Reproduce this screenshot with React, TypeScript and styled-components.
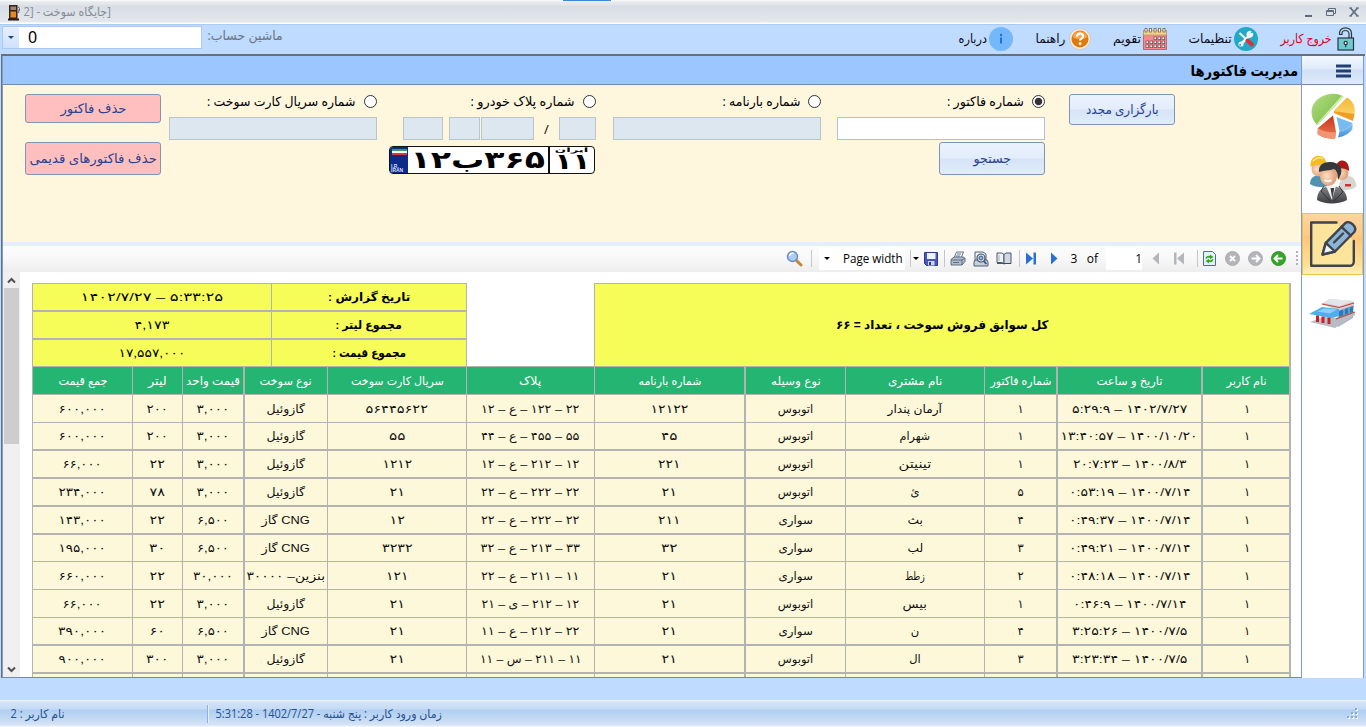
import React, { useLayoutEffect, useRef, useState } from "react";
import styled, { createGlobalStyle, css } from "styled-components";

const Global = createGlobalStyle`
  * { box-sizing: border-box; }
  body { margin: 0; background: #bfdbff; overflow: hidden; }
  svg { display: block; flex: none; }
`;

const uiFont = `"Open Sans", "Noto Sans", "DejaVu Sans", sans-serif`;
const reportFont = `"Liberation Sans", "DejaVu Sans", sans-serif`;

/* ---------- text that is condensed or stretched to a fixed measure ---------- */

const FitBox = styled.span<{ $w?: number }>`
  display: inline-flex;
  flex: none;
  justify-content: center;
  white-space: nowrap;
  ${(p) => p.$w && css`width: ${p.$w}px;`}
`;
const FitInner = styled.span<{ $ltr?: boolean; $space?: number }>`
  flex: none;
  white-space: pre;
  direction: rtl;
  ${(p) => p.$ltr && css`direction: ltr; unicode-bidi: bidi-override;`}
  ${(p) => p.$space && css`letter-spacing: ${p.$space}px;`}
`;

function Fit({ w, ltr, space, children }: { w?: number; ltr?: boolean; space?: number; children: React.ReactNode }) {
  const ref = useRef<HTMLSpanElement>(null);
  const [scale, setScale] = useState(1);
  useLayoutEffect(() => {
    if (w && ref.current && ref.current.offsetWidth) setScale(w / ref.current.offsetWidth);
  }, [w, children]);
  return (
    <FitBox $w={w}>
      <FitInner ref={ref} $ltr={ltr} $space={space} style={{ transform: `scaleX(${scale})` }}>{children}</FitInner>
    </FitBox>
  );
}

/* ---------- window ---------- */

const Window = styled.div`
  width: 1366px;
  height: 727px;
  display: flex;
  flex-direction: column;
  background: #bfdbff;
  font: 13px ${uiFont};
  color: #000;
  overflow: hidden;
`;
const TitleBar = styled.header`
  height: 24px;
  flex: none;
  display: flex;
  align-items: center;
  padding: 0 7px 0 8px;
  background: linear-gradient(#fff 0, #e6eaee 2px, #e1e5ea 5px, #d7dde5 6px, #e4e8ec 22px, #fff 23px);
  color: #848b95;
  font-size: 12px;
`;
const TitleText = styled.div`
  margin: 0 0 2px 3px;
`;
const Notch = styled.div`
  width: 48px;
  height: 1px;
  align-self: flex-start;
  margin-left: 452px;
  background: #3f87d9;
`;
const WindowButtons = styled.div`
  margin-left: auto;
  display: flex;
  gap: 13px;
`;
const MenuBar = styled.nav`
  height: 30px;
  flex: none;
  display: flex;
  align-items: flex-start;
  padding: 1px 11px 0 2px;
  background: #bfdbff;
  border-top: 1px solid #a9cbf5;
`;
const Combo = styled.div`
  width: 200px;
  height: 23px;
  display: flex;
  background: #fff;
  border: 1px solid #abc9f2;
  font-size: 16px;
  line-height: 21px;
`;
const ComboArrow = styled.div`
  width: 16px;
  height: 21px;
  display: flex;
  align-items: center;
  justify-content: center;
  background: linear-gradient(#e6f0fd, #cfe2fb);
`;
const ComboValue = styled.div`
  padding-left: 9px;
  font-family: "Noto Sans", sans-serif;
`;
const CalcLabel = styled.div`
  margin-left: 6px;
  line-height: 18px;
  color: #6b7480;
`;
const MenuItems = styled.div`
  margin-left: auto;
  display: flex;
  height: 25px;
  align-items: center;
`;
const MenuItem = styled.div<{ $gap: number; $red?: boolean; $icon: number }>`
  display: flex;
  align-items: center;
  margin-right: ${(p) => p.$gap}px;
  gap: ${(p) => p.$icon}px;
  font-size: 12.5px;
  color: ${(p) => (p.$red ? "#e3001b" : "#0b0b14")};
`;

const Body = styled.main`
  height: 624px;
  flex: none;
  display: flex;
  margin: 0 1px 0 1px;
  border: solid #6a7078;
  border-width: 2px 0 0 1px;
`;
const Left = styled.section`
  width: 1299px;
  flex: none;
  display: flex;
  flex-direction: column;
  border-left: 1px solid #7f9cc4;
`;
const PageTitle = styled.h1`
  height: 29px;
  flex: none;
  margin: 0;
  padding: 0 3px 0 0;
  display: flex;
  align-items: center;
  justify-content: flex-end;
  background: #9bc6ff;
  border-bottom: 1px solid #7089ad;
  font-size: 15px;
  font-weight: 700;
  line-height: 24px;
`;
const Side = styled.aside`
  width: 63px;
  flex: none;
  display: flex;
  flex-direction: column;
  background: #fff;
  border: solid #7f9cc4;
  border-width: 0 1px;
`;
const SideHead = styled.div`
  height: 29px;
  padding: 8px 0 0 34px;
  background: linear-gradient(#f3f8fe, #dfeafa 45%, #cfdff4 50%, #dfebfa);
  border-bottom: 1px solid #7089ad;
`;
const SideItem = styled.div<{ $active?: boolean; $h: number }>`
  height: ${(p) => p.$h}px;
  display: flex;
  justify-content: center;
  align-items: center;
  padding-bottom: ${(p) => (p.$active ? 0 : 2)}px;
  ${(p) => p.$active && css`
    background: linear-gradient(#fdd5a0 0, #ffca85 35%, #ffc579 38%, #ffe09a 85%, #fff0b8 100%);
    border: 1px solid #edc254;
  `}
`;

/* ---------- filter panel ---------- */

const Filters = styled.div`
  height: 157px;
  flex: none;
  display: flex;
  align-items: flex-start;
  padding: 9px 0 0 22px;
  background: #fff6de;
`;
const Strip = styled.div`
  height: 4px;
  flex: none;
  background: #e3efff;
`;
const Column = styled.div<{ $w: number; $ml?: number }>`
  width: ${(p) => p.$w}px;
  flex: none;
  margin-left: ${(p) => p.$ml ?? 0}px;
  display: flex;
  flex-direction: column;
  align-items: flex-end;
`;
const Button = styled.button<{ $w: number; $h: number; $danger?: boolean; $mt?: number }>`
  width: ${(p) => p.$w}px;
  height: ${(p) => p.$h}px;
  margin: ${(p) => p.$mt ?? 0}px 0 0;
  padding: 0 0 2px;
  display: flex;
  align-items: center;
  justify-content: center;
  border: 1px solid #7f95b8;
  border-radius: 3px;
  color: #29428c;
  font: 13px ${uiFont};
  background: ${(p) => (p.$danger ? "#ffbfbf" : "linear-gradient(#eaf2fc 0, #e3edfb 48%, #d5e4f7 52%, #e0ecfb 100%)")};
`;
const RadioRow = styled.div`
  height: 14px;
  display: flex;
  align-items: center;
  gap: 8px;
  margin-bottom: 9px;
`;
const Radio = styled.span<{ $on?: boolean }>`
  width: 13px;
  height: 13px;
  border: 1px solid #333;
  border-radius: 50%;
  background: ${(p) => (p.$on ? "radial-gradient(circle, #333 0 3.3px, #fff 4.2px)" : "#fff")};
`;
const Field = styled.div<{ $w: number; $on?: boolean }>`
  width: ${(p) => p.$w}px;
  height: 23px;
  flex: none;
  background: ${(p) => (p.$on ? "#fff" : "#dde7f0")};
  border: 1px solid ${(p) => (p.$on ? "#abc1de" : "#b9c5cc")};
`;
const PlateFields = styled.div`
  display: flex;
  align-items: center;
`;
const Slash = styled.span`
  width: 25px;
  text-align: center;
`;
const Spacer = styled.span<{ $w: number }>`
  width: ${(p) => p.$w}px;
  flex: none;
`;
const Plate = styled.div`
  width: 206px;
  height: 28px;
  margin: 6px 1px 0 0;
  display: flex;
  overflow: hidden;
  background: #fff;
  border: 1.5px solid #111;
  border-radius: 4px;
  font: 700 24px/25px "DejaVu Sans", sans-serif;
`;
const PlateFlag = styled.div`
  width: 18px;
  display: flex;
  flex-direction: column;
  justify-content: space-between;
  background: #0b2c8a;
  color: #cfdcf8;
  font: 700 5px/4px "Liberation Sans", sans-serif;
  padding: 2px 1px 1px;
`;
const Flag = styled.div`
  height: 6px;
  margin-left: 1px;
  background: linear-gradient(#3c9a5b 0 2px, #fff 2px 4px, #d43c3c 4px);
`;
const PlateMain = styled.div`
  flex: 1;
  display: flex;
  justify-content: center;
  align-items: center;
`;
const PlateCode = styled.div`
  width: 46px;
  display: flex;
  flex-direction: column;
  align-items: center;
  border-left: 2px solid #111;
  font-size: 22px;
  line-height: 18px;
`;
const PlateCountry = styled.div`
  height: 6px;
  font-size: 6px;
  line-height: 6px;
`;

/* ---------- report toolbar ---------- */

const ReportBar = styled.div`
  height: 25px;
  flex: none;
  display: flex;
  align-items: center;
  background: linear-gradient(#fcfcfd, #f8f8f8 50%, #eee 100%);
  font: 12px "Open Sans", sans-serif;
`;
const Slot = styled.div<{ $w: number; $white?: boolean; $right?: number }>`
  width: ${(p) => p.$w}px;
  height: 23px;
  flex: none;
  display: flex;
  align-items: center;
  justify-content: ${(p) => (p.$right !== undefined ? "flex-end" : "center")};
  padding-right: ${(p) => p.$right ?? 0}px;
  background: ${(p) => (p.$white ? "#fff" : "transparent")};
`;
const Sep = styled.div<{ $l: number; $r: number }>`
  width: 1px;
  height: 17px;
  flex: none;
  margin: 0 ${(p) => p.$r}px 0 ${(p) => p.$l}px;
  background: #c3c6cb;
`;
const Caret = styled.span<{ $c?: string }>`
  border: 3px solid transparent;
  border-top-color: ${(p) => p.$c ?? "#000"};
  border-bottom: 0;
`;
const Grip = styled.div`
  width: 2px;
  height: 15px;
  background: repeating-linear-gradient(#aeb3ba 0 2px, transparent 2px 4px);
`;

/* ---------- report ---------- */

const Viewer = styled.div`
  height: 407px;
  flex: none;
  display: flex;
  background: #fff;
  border-top: 1px solid #eee;
  border-bottom: 1px solid #7089ad;
  overflow: hidden;
`;
const Scroll = styled.div`
  width: 17px;
  flex: none;
  display: flex;
  flex-direction: column;
  align-items: center;
  background: #f0f0f0;
  padding: 5px 1px 4px 1px;
`;
const Thumb = styled.div`
  width: 15px;
  height: 156px;
  margin: 4px 0 auto;
  background: #cdcdcd;
`;
const Sheet = styled.div`
  margin: 11px 0 0 12px;
  width: 1259px;
  flex: none;
  font: 11.5px ${reportFont};
`;
const line = "#b3b3b3";
const Summary = styled.div`
  display: flex;
  height: 83px;
`;
const SummaryGrid = styled.div`
  width: 435px;
  display: grid;
  grid-template-columns: 239px 195px;
  grid-template-rows: 27px 28px 28px;
  border-right: 1px solid ${line};
`;
const SummaryCell = styled.div<{ $thick?: boolean; $bold?: boolean }>`
  display: flex;
  align-items: center;
  justify-content: center;
  background: #f7fd58;
  border-left: 1px solid ${line};
  border-top: ${(p) => (p.$thick ? 2 : 1)}px solid ${line};
  font-weight: ${(p) => (p.$bold ? 700 : 400)};
`;
const SummaryTitle = styled.div`
  margin-left: 127px;
  width: 697px;
  display: flex;
  align-items: center;
  justify-content: center;
  background: #f7fd58;
  border: solid ${line};
  border-width: 1px 2px 0 1px;
  font-weight: 700;
  font-size: 12px;
`;
const Row = styled.div<{ $h: number; $thick?: boolean; $head?: boolean }>`
  display: grid;
  grid-template-columns: 100px 50px 61px 84px 139px 128px 150px 101px 139px 72px 145px 90px;
  height: ${(p) => p.$h}px;
  overflow: hidden;
  border-top: ${(p) => (p.$thick ? 2 : 1)}px solid ${line};
  border-right: 2px solid ${line};
  background: ${(p) => (p.$head ? "#24b573" : "#fdf8da")};
  color: ${(p) => (p.$head ? "#fff" : "#101010")};
`;
const Cell = styled.div<{ $thick?: boolean }>`
  display: flex;
  align-items: center;
  justify-content: center;
  min-width: 0;
  border-left: ${(p) => (p.$thick ? 2 : 1)}px solid ${line};
`;

/* ---------- status bar ---------- */

const Band = styled.div`
  height: 22px;
  flex: none;
  margin-left: 2px;
`;
const Status = styled.footer`
  height: 27px;
  flex: none;
  display: flex;
  align-items: center;
  padding: 0 8px 0 10px;
  background: linear-gradient(#eaf3fe 0 1px, #d3e3f7 2px, #c5dbf5 9px, #afcef2 10px, #c4daf4 19px, #d6e4f5 25px, #edf4fc 26px);
  color: #25508f;
  font-size: 12px;
`;
const StatusSep = styled.div<{ $l: number }>`
  width: 2px;
  height: 18px;
  margin: 0 7px 0 ${(p) => p.$l}px;
  border-left: 1px solid #8fb0dc;
  border-right: 1px solid #e6f0fc;
`;

/* ---------- icons ---------- */

const PumpIcon = () => (
  <svg width="13" height="17" viewBox="0 0 13 17">
    <rect x="0" y="14.5" width="11" height="2" fill="#2b1a14" />
    <rect x="1" y="1" width="8.500" height="14" fill="#3a2119" />
    <rect x="2.500" y="2.500" width="5.500" height="3.500" fill="#9b8577" />
    <rect x="2.500" y="7.500" width="5.500" height="6" fill="#e28b25" />
    <path d="M9.500 8.500h1.300V5.500M10 2.500l1.500 2v2" fill="none" stroke="#6b5a55" />
  </svg>
);
const MinIcon = () => <svg width="9" height="12"><path d="M1 10h7" stroke="#5d6b7c" strokeWidth="2" /></svg>;
const RestoreIcon = () => (
  <svg width="10" height="12" viewBox="0 0 10 12" fill="none" stroke="#5d6b7c">
    <path d="M.5 4.500h7v5h-7zM2.500 4V2.500h7v5H8M1 5.500h6" />
  </svg>
);
const CloseIcon = () => (
  <svg width="10" height="12" viewBox="0 0 10 12"><path d="M1.500 2l7 8M8.500 2l-7 8" stroke="#5d6b7c" strokeWidth="1.700" /><path d="M0 2h3M7 2h3M0 10h3M7 10h3" stroke="#5d6b7c" /></svg>
);
const LockIcon = () => (
  <svg width="18" height="24" viewBox="0 0 18 24" stroke="#2b3440" strokeWidth="1.200">
    <path d="M2.500 7.500V6a6 5.200 0 0 1 12 0v6h-2.500V6.500a3.500 3 0 0 0-7 0v1z" fill="#bfe3ee" />
    <rect x="1" y="11" width="15.500" height="12" fill="#6fcad0" />
    <circle cx="8.700" cy="16" r="1.600" fill="#fff" />
    <path d="M8.700 17.600v2.600" />
  </svg>
);
const ToolsIcon = () => (
  <svg width="24" height="24" viewBox="0 0 24 24">
    <circle cx="12" cy="12" r="12" fill="#22a9c6" />
    <path d="M17 7L7.500 16.500" stroke="#f3f3f3" strokeWidth="2.500" strokeLinecap="round" />
    <path d="M18.800 5.500l-2.300 2.200-1-1 2.200-2.300a3.500 3.500 0 1 0 1.100 1.100z" fill="#f3f3f3" />
    <circle cx="7" cy="17" r="2.600" fill="#f3f3f3" /><circle cx="6.200" cy="17.800" r="1" fill="#22a9c6" />
    <path d="M5.500 6l7.500 7" stroke="#f3f3f3" strokeWidth="2" />
    <path d="M13.500 13.500l4.500 4" stroke="#d5333d" strokeWidth="4" strokeLinecap="round" />
  </svg>
);
const CalendarIcon = () => (
  <svg width="24" height="22" viewBox="0 0 24 22">
    <rect x=".5" y="3" width="23" height="18.500" fill="#f48a8d" stroke="#b96b6b" />
    <rect x=".5" y="2.500" width="23" height="4.500" fill="#f2d58b" stroke="#b39a6a" strokeWidth=".7" />
    {[3, 7.5, 12, 16.5, 21].map((x) => <rect key={x} x={x - 1} y=".5" width="2" height="3.500" fill="#fff" stroke="#75655b" strokeWidth=".8" />)}
    {[9, 13, 17].map((y) => [3, 7, 11, 15, 19].map((x) => (y === 9 && x < 10 ? null : (
      <rect key={`${x}-${y}`} x={x} y={y} width="2.600" height="2.600" fill="#fff" stroke="#815359" strokeWidth=".8" />
    ))))}
  </svg>
);
const HelpIcon = () => (
  <svg width="22" height="22" viewBox="0 0 22 22">
    <circle cx="11" cy="11" r="10.500" fill="#f4ece2" stroke="#c9b9a5" strokeWidth=".6" />
    <circle cx="11" cy="11" r="8.500" fill="#e2770a" /><path d="M3.500 9a7.800 7.800 0 0 1 15 0c-4 3-11 3-15 0z" fill="#f5a649" />
    <path d="M8 8.700c0-4 6-4 6-.5 0 2.300-2.900 2.300-2.900 4.300" fill="none" stroke="#fff" strokeWidth="2.200" />
    <circle cx="11.100" cy="15.700" r="1.400" fill="#fff" />
  </svg>
);
const InfoIcon = () => (
  <svg width="24" height="24" viewBox="0 0 24 24">
    <circle cx="12" cy="12" r="12" fill="#74b7fb" />
    <path d="M12 10.500v6" stroke="#1473e6" strokeWidth="2" /><circle cx="12" cy="8" r="1.200" fill="#1473e6" />
  </svg>
);
const BarsIcon = () => <svg width="15" height="14"><path d="M0 2h15M0 7h15M0 12h15" stroke="#1f3f77" strokeWidth="3" /></svg>;

const PieIcon = () => (
  <svg width="46" height="46" viewBox="0 0 46 46">
    <defs>
      <linearGradient id="pg" x1="0" y1="0" x2="1" y2="1"><stop offset="0" stopColor="#b4de84" /><stop offset="1" stopColor="#6eb63a" /></linearGradient>
      <linearGradient id="py" x1="0" y1="0" x2="0" y2="1"><stop offset="0" stopColor="#f5b735" /><stop offset="1" stopColor="#fbd66f" /></linearGradient>
      <linearGradient id="pr" x1="0" y1="0" x2="0" y2="1"><stop offset="0" stopColor="#c8321b" /><stop offset="1" stopColor="#ec7a55" /></linearGradient>
      <linearGradient id="pb" x1="0" y1="0" x2="0" y2="1"><stop offset="0" stopColor="#8fc8f2" /><stop offset="1" stopColor="#3f8fdc" /></linearGradient>
    </defs>
    <path d="M7 32C-3 22 0 3 22 .8c5-.4 8 .8 11.500 3L7.500 32z" fill="url(#pg)" />
    <path d="M33.500 3.800L7.500 32l-2-3L29 5z" fill="#8fcb5a" />
    <path d="M33.500 3.800L7.500 32l-.8-1L31.500 3z" fill="#d6edba" />
    <path d="M24 17.500L37 4.500c6.500 4 8.500 10 7.500 16.500l-1.500 3z" fill="url(#py)" />
    <path d="M24 18l20.500 3-1.500 7-19-8z" fill="#f09e22" />
    <path d="M23 22.500L26 39l-1 6.500c-7 .8-13-1-17.500-4.500L8 35z" fill="url(#pr)" />
    <path d="M7.700 35c5 3.500 11.500 4.800 18.300 4l-.7 6.500c-7 .8-13.300-1-17.600-4.500z" fill="#f09474" />
    <path d="M26.500 24l16 6c-2.500 4.500-7 7.500-13 8.500z" fill="#79baf0" />
    <path d="M42.500 30v5.500c-2.500 4.500-7.500 7.800-14.500 9l1.500-6c6-1 10.500-4 13-8.500z" fill="url(#pb)" />
  </svg>
);
const PeopleIcon = () => (
  <svg width="48" height="50" viewBox="0 0 48 50">
    <defs>
      <linearGradient id="suit" x1="0" y1="0" x2="0" y2="1"><stop offset="0" stopColor="#85878a" /><stop offset="1" stopColor="#3c3d40" /></linearGradient>
      <radialGradient id="face" cx=".4" cy=".5" r=".6"><stop offset="0" stopColor="#fde0c4" /><stop offset="1" stopColor="#dd9a70" /></radialGradient>
    </defs>
    <path d="M1 29c0-7 5-9 11-9s10 4 10 9c-5 4-16 4-21 0z" fill="#4d93b0" />
    <ellipse cx="9.500" cy="14" rx="7" ry="7.500" fill="url(#face)" />
    <path d="M1.500 12C1 4 5 .8 9.500 .8S17.500 4 17.500 10c-5-1.500-11-1-16 2z" fill="#f4bc1c" />
    <path d="M4 6c3-3 7-4 10-2" stroke="#fde88a" strokeWidth="1.500" fill="none" />
    <path d="M30 35c-1-8 3-14 9-14s8 6 8.500 10c-3 4-12 5-17.500 4z" fill="#d7d5cf" />
    <ellipse cx="33" cy="18" rx="6.500" ry="7" fill="url(#face)" />
    <path d="M27 13c0-5 3-7.500 6.500-7.500S40.500 9 40 16c-4-3-8-3-13-3z" fill="#a9191b" />
    <path d="M36 29h6v2.500h-6z" fill="#c33" />
    <path d="M8 45c0-9 6-14 14.500-14S38 36 38 45c-7 4-22 5-30 0z" fill="url(#suit)" />
    <path d="M17 31l6 14 4-14z" fill="#f4f4f4" /><path d="M21.500 33l1.800 11 2-11z" fill="#3d3d42" />
    <path d="M15 31l-3 5 9 10M30 31l4 6-9 9" stroke="#303236" fill="none" />
    <ellipse cx="19.500" cy="21" rx="8.500" ry="10" fill="url(#face)" />
    <path d="M10 17C9 9 16 6.500 22 7s12 4 10 12l-3 6c0-6-1-9-4-11-5 2-10 1-15 3z" fill="#37383c" />
    <path d="M15.500 25c2 1.500 5 1.500 7 0" stroke="#fff" strokeWidth="1.600" fill="none" />
  </svg>
);
const EditIcon = () => (
  <svg width="48" height="48" viewBox="0 0 48 48" fill="none" stroke="#3e444b" strokeWidth="2.400" strokeLinejoin="round" strokeLinecap="round">
    <path d="M27.500 2.500H2.200v43.300h42V21" stroke="none" fill="#fde49c" />
    <path d="M27.500 2.500H2.200v43.300h38.600a4 4 0 0 0 4-4V21" />
    <path d="M13.500 34.500l3.300-11.700L36 3.300c4-4 13 3.500 9.300 8.700L26 31.500z" fill="#8cb4d6" />
    <path d="M13.500 34.500l3.300-11.700 9.200 8.700z" fill="#eef3fa" />
    <path d="M32.500 6.800l9.300 8.800M25 22.500l9-9" />
  </svg>
);
const StationIcon = () => (
  <svg width="48" height="32" viewBox="0 0 48 32">
    <path d="M13 6l7-5 24 2 1 4-15 6z" fill="#cfd2d8" />
    <path d="M14 4.500L21 1l23 2-13 5z" fill="#e3e5e9" />
    <path d="M28 13l17-6-1 13-15 9z" fill="#a9b2c2" />
    <path d="M30 13l14-5v6l-14 5z" fill="#2f79b7" /><path d="M35 11v6M40 9.500v6" stroke="#8cc5ea" />
    <path d="M13 6l17 3.500L45 5" stroke="#c8402f" strokeWidth="1.200" fill="none" />
    <path d="M1 24l14-5 15 1 16-5v2L26 30z" fill="#b9bcc4" />
    <path d="M27 21l19-7" stroke="#bd4539" strokeWidth="1.200" />
    <path d="M0 16L13 9l17 2v7l-7 2z" fill="#4faeee" /><path d="M8 13.500l7-3 13 1-7 4z" fill="#8dd0fa" />
    <path d="M7 17.500h3v6.500H7zM12.500 18.500h3v6.500h-3zM18.500 19.500h3v6.500h-3z" fill="#c4232c" />
  </svg>
);

const SearchIcon = () => (
  <svg width="17" height="17" viewBox="0 0 17 17">
    <path d="M10 10l5 5" stroke="#c98438" strokeWidth="3" strokeLinecap="round" />
    <circle cx="6.500" cy="6.500" r="5" fill="#a9cdf5" stroke="#6c8cc5" strokeWidth="1.500" />
    <path d="M3.500 6c.5-2 2-3 4-2.500" stroke="#fff" strokeWidth="1.500" fill="none" />
  </svg>
);
const SaveIcon = () => (
  <svg width="14" height="14" viewBox="0 0 14 14">
    <path d="M.5 .5h13v13h-11l-2-2z" fill="#4b56bd" stroke="#2f3a93" />
    <rect x="3" y="1" width="8.500" height="6" fill="#eef2fb" /><rect x="4" y="9" width="6.500" height="4.500" fill="#cfd5ec" /><rect x="5" y="10" width="2" height="3" fill="#2f3a93" />
  </svg>
);
const PrintIcon = () => (
  <svg width="16" height="15" viewBox="0 0 16 15" stroke="#566479" strokeWidth=".9">
    <path d="M4 7L6.500 1h7L11 7z" fill="#fff" /><path d="M1 8.500L4 6h9.500l1.500 1.500v3L12 14H1z" fill="#aebccd" />
    <path d="M1 9h11l3-2M12 9v5M3 11.500h6M7 3h4M6 5h4" fill="none" />
  </svg>
);
const PreviewIcon = () => (
  <svg width="16" height="16" viewBox="0 0 16 16" stroke="#44506a" strokeWidth=".9">
    <path d="M2 1h8l3 2v7H2z" fill="#f1f4f7" /><path d="M1 11l1-2h12l1 2v4H1z" fill="#c6cfda" />
    <circle cx="8" cy="7" r="4" fill="#d6eafd" strokeWidth="1.200" /><circle cx="8" cy="7" r="2" fill="#8ab2dd" /><path d="M10.800 10l2.500 3" strokeWidth="1.800" />
  </svg>
);
const BookIcon = () => (
  <svg width="16" height="13" viewBox="0 0 16 13" stroke="#39485e" strokeWidth=".9">
    <path d="M1 1h5l2 1.500V12L6 10.500H1z" fill="#eef2f6" /><path d="M8 2.500L10 1h5v10.500H9.500L8 12z" fill="#cfd8e3" /><path d="M1 11.500h14" /><path d="M3 3v6" stroke="#9aa7b8" />
  </svg>
);
const Play = ({ dir, bar, c }: { dir: "l" | "r"; bar?: boolean; c: string }) => (
  <svg width="12" height="13" viewBox="0 0 12 13" fill={c}>
    {dir === "r" ? <path d={bar ? "M1 .5l7 6-7 6z" : "M3 .5l6.500 6-6.500 6z"} /> : <path d={bar ? "M11 .5l-7 6 7 6z" : "M9 .5l-6.500 6 6.500 6z"} />}
    {bar && <rect x={dir === "r" ? 8.5 : 1} y=".5" width="2.500" height="12" />}
  </svg>
);
const RefreshIcon = () => (
  <svg width="13" height="15" viewBox="0 0 13 15">
    <path d="M.5 .5h9l3 3v11H.5z" fill="#e6f1fb" stroke="#44709f" />
    <path d="M2.500 7.500C3 5.500 4.500 4.500 7 5V3.500L10.500 6 7 8.500V7C5 6.500 4 7 3.500 8zM10.500 8.500c-.5 2-2 3-4.500 2.500v1.500L2.500 10 6 7.800V9c2 .5 3 0 3.500-1z" fill="#3aa51e" />
  </svg>
);
const RoundIcon = ({ kind }: { kind: "x" | "r" | "l" }) => (
  <svg width="15" height="15" viewBox="0 0 15 15" fill="none" stroke="#fff" strokeWidth="1.800">
    <circle cx="7.500" cy="7.500" r="7" fill={kind === "l" ? "#36a62b" : "#b3b5b8"} stroke={kind === "l" ? "#238018" : "#a3a5a8"} strokeWidth=".8" />
    {kind === "x" && <path d="M5 5l5 5M10 5l-5 5" />}
    {kind === "r" && <path d="M3.500 7.500H11M8 4l3.500 3.500L8 11" />}
    {kind === "l" && <path d="M11.500 7.500H4M7 4L3.500 7.500 7 11" />}
  </svg>
);
const Chevron = ({ up }: { up?: boolean }) => (
  <svg width="9" height="7" viewBox="0 0 9 7"><path d={up ? "M1 5.500l3.500-3.500L8 5.500" : "M1 1.500L4.500 5 8 1.500"} fill="none" stroke="#505050" strokeWidth="2" /></svg>
);
const ResizeGrip = () => (
  <svg width="12" height="12" viewBox="0 0 12 12">
    {[[8, 0], [4, 4], [8, 4], [0, 8], [4, 8], [8, 8]].map(([x, y]) => (
      <g key={`${x}-${y}`}><rect x={x + 1} y={y + 1} width="2" height="2" fill="#fff" /><rect x={x} y={y} width="2" height="2" fill="#86a9d8" /></g>
    ))}
  </svg>
);

/* ---------- data ---------- */

const fa = (s: string) => s.replace(/\d/g, (d) => "۰۱۲۳۴۵۶۷۸۹"[+d]);

type C = [string, number?];

const heads: C[] = [
  ["جمع قیمت", 49], ["لیتر", 19], ["قیمت واحد", 54], ["نوع سوخت", 52], ["سریال کارت سوخت", 93], ["پلاک", 22],
  ["شماره بارنامه", 63], ["نوع وسیله", 50], ["نام مشتری", 54], ["شماره فاکتور", 61], ["تاریخ و ساعت", 66], ["نام کاربر", 40],
];

const gasoil: C = ["گازوئیل", 38];
const cng: C = ["CNG گاز", 48];
const bus: C = ["اتوبوس", 36];
const car: C = ["سواری", 34];

const rows: C[][] = [
  [["600,000", 47], ["200", 22], ["3,000", 33], gasoil, ["56445622", 62], ["12 – ع – 122 – 22", 98], ["12122", 38], bus, ["آرمان پندار", 55], ["1"], ["5:29:9 – 1402/7/27", 116], ["1"]],
  [["600,000", 47], ["200", 22], ["3,000", 33], gasoil, ["55", 16], ["44 – ع – 455 – 55", 98], ["45", 16], bus, ["شهرام", 31], ["1"], ["13:40:57 – 1400/10/20", 137], ["1"]],
  [["66,000", 39], ["22", 15], ["3,000", 33], gasoil, ["1212", 30], ["12 – ع – 212 – 12", 98], ["221", 23], bus, ["تینیتن", 33], ["1"], ["20:7:23 – 1400/8/3", 114], ["1"]],
  [["234,000", 47], ["78", 15], ["3,000", 33], gasoil, ["21", 15], ["22 – ع – 222 – 22", 98], ["21", 15], bus, ["ئ"], ["5"], ["0:53:19 – 1400/7/14", 122], ["1"]],
  [["143,000", 47], ["22", 15], ["6,500", 32], cng, ["12", 15], ["22 – ع – 222 – 22", 98], ["211", 23], car, ["بث", 16], ["4"], ["0:49:37 – 1400/7/14", 122], ["1"]],
  [["195,000", 47], ["30", 16], ["6,500", 32], cng, ["3232", 31], ["32 – ع – 213 – 33", 99], ["32", 16], car, ["لب", 16], ["3"], ["0:49:21 – 1400/7/14", 122], ["1"]],
  [["660,000", 47], ["22", 15], ["30,000", 40], ["بنزین– 30000", 78], ["121", 23], ["22 – ع – 211 – 11", 98], ["21", 15], car, ["زطط", 20], ["2"], ["0:48:18 – 1400/7/14", 122], ["1"]],
  [["66,000", 39], ["22", 15], ["3,000", 33], gasoil, ["21", 15], ["21 – ی – 212 – 12", 98], ["21", 15], bus, ["بیس", 24], ["1"], ["0:46:9 – 1400/7/14", 114], ["1"]],
  [["390,000", 48], ["60", 15], ["6,500", 32], cng, ["21", 15], ["11 – ع – 212 – 22", 98], ["21", 15], car, ["ن"], ["4"], ["3:25:26 – 1400/7/5", 116], ["1"]],
  [["900,000", 47], ["300", 23], ["3,000", 33], gasoil, ["21", 15], ["11 – س – 211 – 11", 102], ["21", 15], bus, ["ال"], ["3"], ["3:23:34 – 1400/7/5", 116], ["1"]],
];
const rowHeights = [28, 27, 28, 28, 28, 28, 28, 28, 27, 28];
const thickRows = [2, 3, 4, 5, 9];
const thickCols = [3, 7, 10, 11];
const plain = [3, 7, 8];
const spaced = [0, 1, 2, 4, 6, 10];

function Filter({ label, w, on }: { label: string; w: number; on?: boolean }) {
  return <RadioRow><Fit w={w}>{label}</Fit><Radio $on={on} /></RadioRow>;
}

export default function App() {
  return (
    <Window>
      <Global />
      <TitleBar>
        <PumpIcon />
        <TitleText><Fit w={87}>{"[جایگاه سوخت - [2"}</Fit></TitleText>
        <Notch />
        <WindowButtons><MinIcon /><RestoreIcon /><CloseIcon /></WindowButtons>
      </TitleBar>
      <MenuBar>
        <Combo>
          <ComboArrow><Caret $c="#23457d" /></ComboArrow>
          <ComboValue>0</ComboValue>
        </Combo>
        <CalcLabel><Fit w={75}>ماشین حساب:</Fit></CalcLabel>
        <MenuItems>
          <MenuItem $gap={22} $icon={2}><Fit w={28}>درباره</Fit><InfoIcon /></MenuItem>
          <MenuItem $gap={22} $icon={4}><Fit w={30}>راهنما</Fit><HelpIcon /></MenuItem>
          <MenuItem $gap={22} $icon={2}><Fit w={28}>تقویم</Fit><CalendarIcon /></MenuItem>
          <MenuItem $gap={23} $icon={2}><Fit w={43}>تنظیمات</Fit><ToolsIcon /></MenuItem>
          <MenuItem $gap={0} $icon={5} $red><Fit w={51}>خروج کاربر</Fit><LockIcon /></MenuItem>
        </MenuItems>
      </MenuBar>

      <Body>
        <Left>
          <PageTitle><Fit w={108}>مدیریت فاکتورها</Fit></PageTitle>
          <Filters>
            <Column $w={136}>
              <Button $w={136} $h={29} $danger><Fit w={66}>حذف فاکتور</Fit></Button>
              <Button $w={136} $h={33} $danger $mt={19}><Fit w={127}>حذف فاکتورهای قدیمی</Fit></Button>
            </Column>
            <Column $w={208} $ml={8}>
              <Filter label="شماره سریال کارت سوخت :" w={149} />
              <Field $w={208} />
            </Column>
            <Column $w={219} $ml={0}>
              <Filter label="شماره پلاک خودرو :" w={104} />
              <PlateFields>
                <Field $w={40} /><Spacer $w={6} /><Field $w={31} /><Spacer $w={1} /><Field $w={53} />
                <Slash>/</Slash><Field $w={37} />
              </PlateFields>
              <Plate>
                <PlateFlag><Flag /><div>I.R.<br />IRAN</div></PlateFlag>
                <PlateMain><Fit w={134} ltr space={2}>{fa("12")}ب{fa("365")}</Fit></PlateMain>
                <PlateCode><PlateCountry><Fit w={33}>ایران</Fit></PlateCountry><Fit w={36} ltr space={4}>{fa("11")}</Fit></PlateCode>
              </Plate>
            </Column>
            <Column $w={208} $ml={17}>
              <Filter label="شماره بارنامه :" w={78} />
              <Field $w={208} />
            </Column>
            <Column $w={208} $ml={16}>
              <Filter label="شماره فاکتور :" w={77} on />
              <Field $w={208} $on />
              <Button $w={106} $h={33} $mt={2}><Fit w={38}>جستجو</Fit></Button>
            </Column>
            <Column $w={106} $ml={24}>
              <Button $w={106} $h={31}><Fit w={73}>بارگزاری مجدد</Fit></Button>
            </Column>
          </Filters>
          <Strip />
          <ReportBar>
            <Spacer $w={779} />
            <Slot $w={24}><SearchIcon /></Slot>
            <Sep $l={5} $r={7} />
            <Slot $w={16} $white><Caret /></Slot>
            <Slot $w={70} $white $right={2}><Fit w={60} ltr>Page width</Fit></Slot>
            <Sep $l={5} $r={1} />
            <Slot $w={8}><Caret /></Slot>
            <Slot $w={22}><SaveIcon /></Slot>
            <Sep $l={2} $r={1} />
            <Slot $w={23}><PrintIcon /></Slot>
            <Slot $w={23}><PreviewIcon /></Slot>
            <Slot $w={23}><BookIcon /></Slot>
            <Sep $l={4} $r={3} />
            <Slot $w={15}><Play dir="r" bar c="#2c6fd4" /></Slot>
            <Slot $w={31}><Play dir="r" c="#2c6fd4" /></Slot>
            <Slot $w={10}>3</Slot>
            <Slot $w={27}>of</Slot>
            <Slot $w={36} $white $right={0}>1</Slot>
            <Slot $w={28}><Play dir="l" c="#b4b6b9" /></Slot>
            <Slot $w={18}><Play dir="l" bar c="#b4b6b9" /></Slot>
            <Sep $l={9} $r={2} />
            <Slot $w={18}><RefreshIcon /></Slot>
            <Slot $w={28}><RoundIcon kind="x" /></Slot>
            <Slot $w={18}><RoundIcon kind="r" /></Slot>
            <Slot $w={28}><RoundIcon kind="l" /></Slot>
            <Spacer $w={4} />
            <Grip />
          </ReportBar>
          <Viewer>
            <Scroll><Chevron up /><Thumb /><Chevron /></Scroll>
            <Sheet>
              <Summary>
                <SummaryGrid>
                  <SummaryCell><Fit w={143} ltr space={1}>{fa("1402/7/27 – 5:33:25")}</Fit></SummaryCell>
                  <SummaryCell $bold><Fit w={82}>تاریخ گزارش :</Fit></SummaryCell>
                  <SummaryCell $thick><Fit w={35} ltr space={1}>{fa("4,173")}</Fit></SummaryCell>
                  <SummaryCell $thick $bold><Fit w={66}>مجموع لیتر :</Fit></SummaryCell>
                  <SummaryCell $thick><Fit w={67} ltr>{fa("17,557,000")}</Fit></SummaryCell>
                  <SummaryCell $thick $bold><Fit w={74}>مجموع قیمت :</Fit></SummaryCell>
                </SummaryGrid>
                <SummaryTitle><Fit w={213}>{fa("کل سوابق فروش سوخت ، تعداد = 66")}</Fit></SummaryTitle>
              </Summary>
              <Row $h={28} $head>
                {heads.map(([t, w], i) => <Cell key={i} $thick={thickCols.includes(i)}><Fit w={w}>{t}</Fit></Cell>)}
              </Row>
              {rows.map((r, ri) => (
                <Row key={ri} $h={rowHeights[ri]} $thick={thickRows.includes(ri)}>
                  {r.map(([t, w], i) => (
                    <Cell key={i} $thick={thickCols.includes(i)}>
                      <Fit w={w} ltr={!plain.includes(i)} space={spaced.includes(i) ? 1 : undefined}>{fa(t)}</Fit>
                    </Cell>
                  ))}
                </Row>
              ))}
              <Row $h={10} $thick>{heads.map((_, i) => <Cell key={i} $thick={thickCols.includes(i)} />)}</Row>
            </Sheet>
          </Viewer>
        </Left>
        <Side>
          <SideHead><BarsIcon /></SideHead>
          <SideItem $h={64}><PieIcon /></SideItem>
          <SideItem $h={64}><PeopleIcon /></SideItem>
          <SideItem $h={62} $active><EditIcon /></SideItem>
          <SideItem $h={80}><StationIcon /></SideItem>
        </Side>
      </Body>

      <Band />
      <Status>
        <Fit w={54}>نام کاربر : 2</Fit>
        <StatusSep $l={143} />
        <Fit w={226}>زمان ورود کاربر : پنج شنبه - 1402/7/27 - 5:31:28</Fit>
        <Spacer $w={905} />
        <ResizeGrip />
      </Status>
    </Window>
  );
}
